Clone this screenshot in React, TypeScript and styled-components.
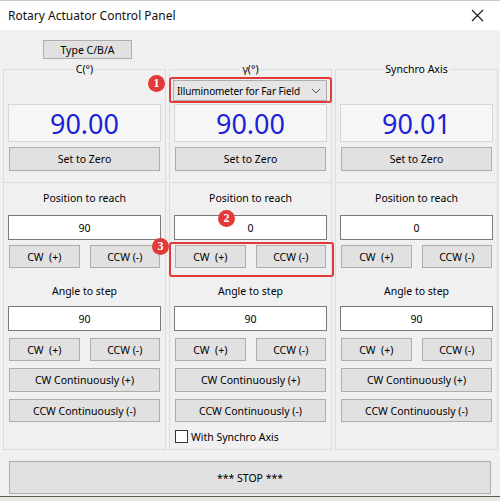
import React from "react";
import styled, { createGlobalStyle } from "styled-components";

interface Axis {
    title: string;
    value: string;
    target: string;
    step: string;
    selector?: string;
    synchro?: boolean;
    marked?: boolean;
}

const axes: Axis[] = [
    { title: "C(°)", value: "90.00", target: "90", step: "90" },
    {
        title: "γ(°)",
        value: "90.00",
        target: "0",
        step: "90",
        selector: "Illuminometer for Far Field",
        synchro: true,
        marked: true,
    },
    { title: "Synchro Axis", value: "90.01", target: "0", step: "90" },
];

const CloseIcon = () => (
    <svg width="13" height="13" viewBox="0 0 13 13">
        <path d="M1 1 L12 12 M12 1 L1 12" stroke="#1a1a1a" strokeWidth="1.1" fill="none" />
    </svg>
);

const Chevron = () => (
    <svg width="10" height="6" viewBox="0 0 10 6">
        <path d="M1 1 L5 5 L9 1" stroke="#555" strokeWidth="1" fill="none" />
    </svg>
);

const AxisGroup: React.FC<{ axis: Axis }> = ({ axis }) => {
    const moveRow = (
        <ButtonRow>
            <Button>{"CW  (+)"}</Button>
            <Button>CCW (-)</Button>
        </ButtonRow>
    );

    return (
        <Group>
            <Legend>{axis.title}</Legend>
            <SelectorSlot>
                {axis.selector && (
                    <Marked $outset="3px 5px 2px 5px">
                        <Select>
                            <span>{axis.selector}</span>
                            <Chevron />
                        </Select>
                        <Badge $left={-26} $top={-5}>1</Badge>
                    </Marked>
                )}
            </SelectorSlot>
            <Display>{axis.value}</Display>
            <Button $h={24} $mt={5}>Set to Zero</Button>
            <Divider />
            <Caption $mt={8}>Position to reach</Caption>
            <Plain>
                <Field $mt={10}>{axis.target}</Field>
                {axis.marked && <Badge $left={44} $top={5}>2</Badge>}
            </Plain>
            {axis.marked ? (
                <Marked $outset="3px 7px 9px 5px" $mt={5}>
                    {moveRow}
                    <Badge $left={-22} $top={-7}>3</Badge>
                </Marked>
            ) : (
                <Spaced $mt={5}>{moveRow}</Spaced>
            )}
            <Caption $mt={16}>Angle to step</Caption>
            <Field $mt={8}>{axis.step}</Field>
            <Spaced $mt={7}>
                <ButtonRow>
                    <Button>{"CW  (+)"}</Button>
                    <Button>CCW (-)</Button>
                </ButtonRow>
            </Spaced>
            <Button $h={24} $mt={7}>CW Continuously (+)</Button>
            <Button $mt={7}>CCW Continuously (-)</Button>
            {axis.synchro && (
                <CheckRow>
                    <CheckBox />
                    With Synchro Axis
                </CheckRow>
            )}
        </Group>
    );
};

const App: React.FC = () => {
    return (
        <Window>
            <GlobalStyle />
            <TitleBar>
                <Title>Rotary Actuator Control Panel</Title>
                <CloseIcon />
            </TitleBar>
            <Body>
                <TypeButton>Type C/B/A</TypeButton>
                <Columns>
                    {axes.map((a) => (
                        <AxisGroup key={a.title} axis={a} />
                    ))}
                </Columns>
                <StopButton>*** STOP ***</StopButton>
            </Body>
            <Behind />
        </Window>
    );
};

const GlobalStyle = createGlobalStyle`
    html, body {
        margin: 0;
        padding: 0;
        background: #f0f0f0;
    }
    body {
        font-family: "Noto Sans", "Segoe UI", sans-serif;
        font-size: 10.5px;
        color: #000;
    }
    * {
        box-sizing: border-box;
    }
`;

const Window = styled.div`
    width: 500px;
    height: 501px;
    display: flex;
    flex-direction: column;
    overflow: hidden;
    background: #f0f0f0;
`;

const TitleBar = styled.div`
    height: 30px;
    flex: none;
    background: #fff;
    border-top: 1px solid #c8c8c8;
    display: flex;
    align-items: center;
    justify-content: space-between;
    padding: 0 16px 0 8px;
`;

const Title = styled.span`
    font-size: 12px;
    color: #111;
`;

const Body = styled.div`
    flex: none;
    padding: 10px 3px 0;
    display: flex;
    flex-direction: column;
`;

const Button = styled.div<{ $h?: number; $mt?: number }>`
    height: ${(p) => p.$h ?? 23}px;
    margin: ${(p) => p.$mt ?? 0}px 1px 0;
    background: #e1e1e1;
    border: 1px solid #adadad;
    display: flex;
    align-items: center;
    justify-content: center;
    white-space: pre;
    flex: none;
`;

const TypeButton = styled(Button)`
    width: 89px;
    height: 19px;
    margin: 0 0 3px 40px;
`;

const StopButton = styled(Button)`
    height: 33px;
    margin: 11px 6px 0;
`;

const Columns = styled.div`
    display: grid;
    grid-template-columns: repeat(3, 163px);
    column-gap: 3px;
`;

const Group = styled.fieldset`
    margin: 0;
    padding: 4px 4px 0;
    height: 388px;
    min-width: 0;
    border: 1px solid #dcdcdc;
    display: flex;
    flex-direction: column;
`;

const Legend = styled.legend`
    margin: 0 auto;
    padding: 0 2px;
    line-height: 14px;
`;

const SelectorSlot = styled.div`
    height: 21px;
    flex: none;
`;

const Select = styled.div`
    height: 21px;
    margin-left: -1px;
    background: #e5e5e5;
    border: 1px solid #acacac;
    display: flex;
    align-items: center;
    justify-content: space-between;
    padding: 0 5px 0 3px;
    font-size: 10px;
    letter-spacing: -0.1px;
`;

const Display = styled.div`
    height: 38px;
    margin-top: 3px;
    background: #f6f6f6;
    border: 1px solid #d6d6d6;
    display: flex;
    align-items: center;
    justify-content: center;
    font-size: 27px;
    color: #1f1fd8;
    flex: none;
`;

const Divider = styled.div`
    margin: 11px -5px 0;
    border-top: 1px solid #dcdcdc;
`;

const Caption = styled.div<{ $mt: number }>`
    margin-top: ${(p) => p.$mt}px;
    line-height: 14px;
    text-align: center;
`;

const Field = styled.div<{ $mt: number }>`
    height: 25px;
    margin-top: ${(p) => p.$mt}px;
    background: #fff;
    border: 1px solid #7a7a7a;
    display: flex;
    align-items: center;
    justify-content: center;
`;

const ButtonRow = styled.div`
    display: grid;
    grid-template-columns: 1fr 1fr;
    column-gap: 8px;
`;

const Plain = styled.div`
    position: relative;
`;

const Spaced = styled.div<{ $mt: number }>`
    margin-top: ${(p) => p.$mt}px;
`;

// red call-out frame drawn over a control
const Marked = styled.div<{ $outset: string; $mt?: number }>`
    position: relative;
    margin-top: ${(p) => p.$mt ?? 0}px;

    &::after {
        content: "";
        position: absolute;
        inset: ${(p) =>
            p.$outset
                .split(" ")
                .map((v) => `-${v}`)
                .join(" ")};
        border: 2px solid #e03a3a;
        border-radius: 3px;
        pointer-events: none;
    }
`;

const Badge = styled.span<{ $left: number; $top: number }>`
    position: absolute;
    left: ${(p) => p.$left}px;
    top: ${(p) => p.$top}px;
    width: 17px;
    height: 17px;
    border-radius: 50%;
    background: #e2393a;
    color: #fff;
    font-family: "Liberation Serif", serif;
    font-weight: bold;
    font-size: 12px;
    line-height: 17px;
    text-align: center;
    z-index: 2;
`;

const CheckRow = styled.div`
    margin-top: 8px;
    height: 13px;
    display: flex;
    align-items: center;
    gap: 3px;
    padding-left: 1px;
`;

const CheckBox = styled.span`
    width: 13px;
    height: 13px;
    background: #fff;
    border: 1px solid #333;
    flex: none;
`;

const Behind = styled.div`
    flex: 1;
    margin-top: 2px;
    border-top: 1px solid #5f5a48;
    background: #e6e6e6;
`;

export default App;
